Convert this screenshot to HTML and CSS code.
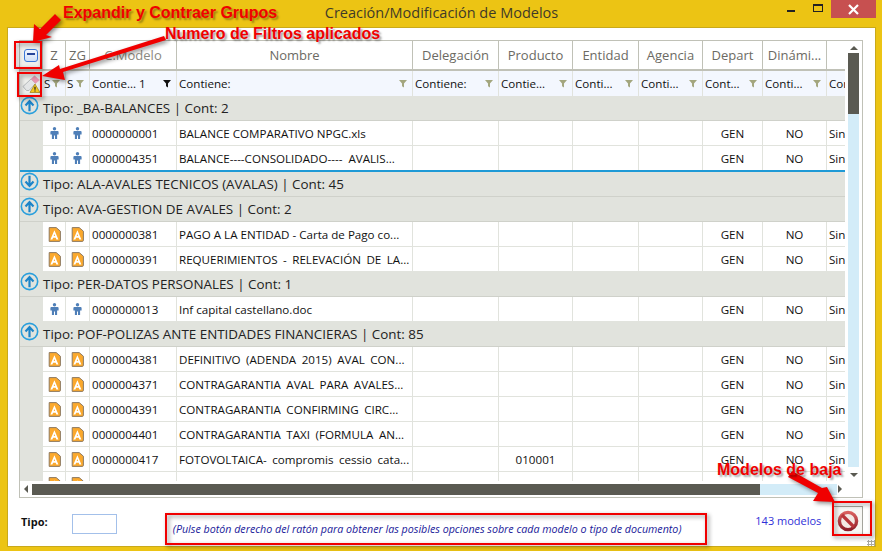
FILE: index.html
```html
<!DOCTYPE html>
<html lang="es">
<head>
<meta charset="utf-8">
<title>Creación/Modificación de Modelos</title>
<link rel="stylesheet" href="styles.css">
</head>
<body>
<svg class="defs" width="0" height="0" aria-hidden="true">
  <defs>
    <symbol id="person" viewBox="0 0 9 12">
      <circle cx="4.5" cy="1.7" r="1.7" fill="#4f7fb8"/>
      <path d="M1.4 4h6.2a1 1 0 0 1 1 1v2.6H7.1V12H5v-3.6H4V12H1.9V7.6H.4V5a1 1 0 0 1 1-1z" fill="#4f7fb8"/>
    </symbol>
    <symbol id="doc" viewBox="0 0 13 15">
      <path d="M1.2.6h7l4.2 3.6v9a1.2 1.2 0 0 1-1.2 1.2h-10z" fill="#fba92d" stroke="#8d7a63" stroke-width="1"/>
      <path d="M6.4 3.2 10.4 12.6H8.4l-.7-1.8H5.1l-.7 1.8H2.4zM5.7 9.1h1.4L6.4 7.1z" fill="#fff"/>
    </symbol>
    <symbol id="up" viewBox="0 0 20 20">
      <circle cx="10" cy="10" r="8.6" fill="none" stroke="#2a9fdc" stroke-width="1.7"/>
      <path d="M10 16V6M5.8 10 10 5.4 14.2 10" fill="none" stroke="#1c84c8" stroke-width="2.3"/>
    </symbol>
    <symbol id="down" viewBox="0 0 20 20">
      <circle cx="10" cy="10" r="8.6" fill="none" stroke="#2a9fdc" stroke-width="1.7"/>
      <path d="M10 4v10M5.8 10l4.2 4.6 4.2-4.6" fill="none" stroke="#1c84c8" stroke-width="2.3"/>
    </symbol>
    <symbol id="funnel" viewBox="0 0 9 9">
      <path d="M0 .5h9L5.6 4.4V9L3.4 7.6V4.4z"/>
    </symbol>
  </defs>
</svg>

<main class="window">
  <header class="titlebar">
    <h1 class="title">Creación/Modificación de Modelos</h1>
    <div class="controls">
      <span class="min"></span>
      <span class="max"></span>
      <span class="close">
        <svg width="11" height="11" viewBox="0 0 11 11"><path d="M1 1l9 9M10 1l-9 9" stroke="#fff" stroke-width="2.2"/></svg>
      </span>
    </div>
  </header>

  <section class="client">
    <div class="grid">
      <div class="grid-body">
        <div class="viewport">
          <div class="row heads">
            <div class="corner"><span class="minus"></span></div>
            <div>Z</div><div>ZG</div><div class="dim">C.Modelo</div><div>Nombre</div><div>Delegación</div><div>Producto</div><div>Entidad</div><div>Agencia</div><div>Depart</div><div>Dinámi...</div><div></div>
          </div>

          <div class="row filters">
            <div class="corner">
              <svg width="20" height="20" viewBox="0 0 20 20">
                <path d="M1 12.5 9 5l4.5 4.5-6.5 7H4.500z" fill="#e3e5e6" stroke="#b4b8ba"/>
                <path d="M9 5l3.500-3.200 5 4.200-4 3.500z" fill="#e996b0" stroke="#d9a0b2" stroke-width=".5"/>
                <path d="M13 10l5 8.500H8z" fill="#f4c91e" stroke="#9a7d14" stroke-width=".7"/>
                <path d="M13 12.800v3M13 16.400v1.100" stroke="#222" stroke-width="1.200"/>
              </svg>
            </div>
            <div>S<svg class="fn"><use href="#funnel"/></svg></div>
            <div>S<svg class="fn"><use href="#funnel"/></svg></div>
            <div>Contie... 1<svg class="fn on"><use href="#funnel"/></svg></div>
            <div>Contiene:<svg class="fn"><use href="#funnel"/></svg></div>
            <div>Contiene:<svg class="fn"><use href="#funnel"/></svg></div>
            <div>Contie...<svg class="fn"><use href="#funnel"/></svg></div>
            <div>Conti...<svg class="fn"><use href="#funnel"/></svg></div>
            <div>Conti...<svg class="fn"><use href="#funnel"/></svg></div>
            <div>Cont...<svg class="fn"><use href="#funnel"/></svg></div>
            <div>Conti...<svg class="fn"><use href="#funnel"/></svg></div>
            <div>Cor</div>
          </div>

          <div class="group"><svg class="toggle"><use href="#up"/></svg>Tipo: _BA-BALANCES | Cont: 2</div>
          <div class="row data"><div class="gutter"></div><div class="ic"><svg class="p"><use href="#person"/></svg></div><div class="ic"><svg class="p"><use href="#person"/></svg></div><div>0000000001</div><div>BALANCE COMPARATIVO NPGC.xls</div><div></div><div></div><div></div><div></div><div class="c">GEN</div><div class="c">NO</div><div>Sin</div></div>
          <div class="row data last"><div class="gutter"></div><div class="ic"><svg class="p"><use href="#person"/></svg></div><div class="ic"><svg class="p"><use href="#person"/></svg></div><div>0000004351</div><div>BALANCE----CONSOLIDADO----&nbsp; AVALIS...</div><div></div><div></div><div></div><div></div><div class="c">GEN</div><div class="c">NO</div><div>Sin</div></div>

          <div class="group"><svg class="toggle"><use href="#down"/></svg>Tipo: ALA-AVALES TECNICOS (AVALAS) | Cont: 45</div>
          <div class="group"><svg class="toggle"><use href="#up"/></svg>Tipo: AVA-GESTION DE AVALES | Cont: 2</div>
          <div class="row data"><div class="gutter"></div><div class="ic"><svg class="d"><use href="#doc"/></svg></div><div class="ic"><svg class="d"><use href="#doc"/></svg></div><div>0000000381</div><div>PAGO A LA ENTIDAD - Carta de Pago co...</div><div></div><div></div><div></div><div></div><div class="c">GEN</div><div class="c">NO</div><div>Sin</div></div>
          <div class="row data"><div class="gutter"></div><div class="ic"><svg class="d"><use href="#doc"/></svg></div><div class="ic"><svg class="d"><use href="#doc"/></svg></div><div>0000000391</div><div class="wide">REQUERIMIENTOS - RELEVACIÓN DE LA...</div><div></div><div></div><div></div><div></div><div class="c">GEN</div><div class="c">NO</div><div>Sin</div></div>

          <div class="group"><svg class="toggle"><use href="#up"/></svg>Tipo: PER-DATOS PERSONALES | Cont: 1</div>
          <div class="row data"><div class="gutter"></div><div class="ic"><svg class="p"><use href="#person"/></svg></div><div class="ic"><svg class="p"><use href="#person"/></svg></div><div>0000000013</div><div>Inf capital castellano.doc</div><div></div><div></div><div></div><div></div><div class="c">GEN</div><div class="c">NO</div><div>Sin</div></div>

          <div class="group"><svg class="toggle"><use href="#up"/></svg>Tipo: POF-POLIZAS ANTE ENTIDADES FINANCIERAS | Cont: 85</div>
          <div class="row data"><div class="gutter"></div><div class="ic"><svg class="d"><use href="#doc"/></svg></div><div class="ic"><svg class="d"><use href="#doc"/></svg></div><div>0000004381</div><div class="wide">DEFINITIVO (ADENDA 2015) AVAL CON...</div><div></div><div></div><div></div><div></div><div class="c">GEN</div><div class="c">NO</div><div>Sin</div></div>
          <div class="row data"><div class="gutter"></div><div class="ic"><svg class="d"><use href="#doc"/></svg></div><div class="ic"><svg class="d"><use href="#doc"/></svg></div><div>0000004371</div><div class="wide">CONTRAGARANTIA AVAL PARA AVALES...</div><div></div><div></div><div></div><div></div><div class="c">GEN</div><div class="c">NO</div><div>Sin</div></div>
          <div class="row data"><div class="gutter"></div><div class="ic"><svg class="d"><use href="#doc"/></svg></div><div class="ic"><svg class="d"><use href="#doc"/></svg></div><div>0000004391</div><div class="wide">CONTRAGARANTIA CONFIRMING CIRC...</div><div></div><div></div><div></div><div></div><div class="c">GEN</div><div class="c">NO</div><div>Sin</div></div>
          <div class="row data"><div class="gutter"></div><div class="ic"><svg class="d"><use href="#doc"/></svg></div><div class="ic"><svg class="d"><use href="#doc"/></svg></div><div>0000004401</div><div class="wide">CONTRAGARANTIA TAXI (FORMULA AN...</div><div></div><div></div><div></div><div></div><div class="c">GEN</div><div class="c">NO</div><div>Sin</div></div>
          <div class="row data"><div class="gutter"></div><div class="ic"><svg class="d"><use href="#doc"/></svg></div><div class="ic"><svg class="d"><use href="#doc"/></svg></div><div>0000000417</div><div class="wide">FOTOVOLTAICA- compromis cessio cata...</div><div></div><div class="c">010001</div><div></div><div></div><div class="c">GEN</div><div class="c">NO</div><div>Sin</div></div>
          <div class="row data"><div class="gutter"></div><div class="ic"><svg class="d"><use href="#doc"/></svg></div><div class="ic"><svg class="d"><use href="#doc"/></svg></div><div>0000000418</div><div class="wide">FOTOVOLTAICA- Compromis cessio cata...</div><div></div><div class="c">010001</div><div></div><div></div><div class="c">GEN</div><div class="c">NO</div><div>Sin</div></div>
        </div>

        <div class="vscroll">
          <span class="arrow-up"></span>
          <span class="vtrack"><span class="vthumb"></span></span>
          <span class="arrow-down"></span>
        </div>
      </div>
      <div class="hscroll">
        <span class="arrow-left"></span>
        <span class="htrack"><span class="hthumb"></span></span>
        <span class="arrow-right"></span>
      </div>
    </div>

    <footer class="footer">
      <label class="type-label" for="tipo">Tipo:</label>
      <input class="type-input" id="tipo" type="text">
      <p class="hint">(Pulse botón derecho del ratón para obtener las posibles opciones sobre cada modelo o tipo de documento)</p>
      <span class="count">143 modelos</span>
      <button class="ban" type="button" aria-label="Modelos de baja">
        <svg width="22" height="22" viewBox="0 0 22 22">
          <defs><linearGradient id="banfill" x1="0" y1="0" x2="0" y2="1"><stop offset="0" stop-color="#d9605e"/><stop offset="1" stop-color="#8e1f2a"/></linearGradient></defs>
          <circle cx="11" cy="11" r="8.600" fill="#f3e9e4" stroke="url(#banfill)" stroke-width="3.400"/>
          <path d="M5 5l12 12" stroke="#b8363a" stroke-width="3.200"/>
        </svg>
      </button>
      <span class="grip"></span>
    </footer>
  </section>
</main>

<div class="notes">
  <svg class="arrows" width="882" height="551" viewBox="0 0 882 551">
    <g fill="#f00000">
      <path d="M33 42 34 24l6 5 15-15 6 6-15 15 6 2z"/>
      <path d="M42 76 59 65l1 4L164 36l2 4L63 72l2 8z"/>
      <path d="M835 502 813 501l5-8-30-16 4-6 30 17 5-1z"/>
    </g>
    <g fill="none" stroke="#f00000" stroke-width="2">
      <rect x="15" y="42" width="26" height="26"/>
      <rect x="18" y="73" width="23" height="23"/>
      <rect x="166" y="514" width="540" height="30"/>
      <rect x="833" y="502" width="38" height="33"/>
    </g>
  </svg>
  <span class="note note-a">Expandir y Contraer Grupos</span>
  <span class="note note-b">Numero de Filtros aplicados</span>
  <span class="note note-c">Modelos de baja</span>
</div>
</body>
</html>
```

FILE: styles.css
```css
* { box-sizing: border-box; }
html, body { margin: 0; padding: 0; }
body {
  width: 882px;
  height: 551px;
  overflow: hidden;
  position: relative;
  font-family: "Open Sans", "Noto Sans", sans-serif;
  background: #ecc414;
}
.defs { position: absolute; }

.window {
  width: 882px;
  height: 551px;
  padding: 0 6px 4px 7px;
  display: flex;
  flex-direction: column;
  background: #ecc414;
}
.titlebar {
  height: 27px;
  flex: none;
  position: relative;
  display: flex;
  justify-content: center;
  align-items: center;
}
.title {
  margin: 0;
  font-family: "Open Sans", sans-serif;
  font-size: 14.5px;
  font-weight: 400;
  color: #3f3a28;
  transform: translateY(-1px);
}
.controls {
  position: absolute;
  right: 0;
  top: 0;
  display: flex;
  align-items: flex-start;
}
.min { width: 8px; height: 2px; margin: 10px 18px 0 0; background: #222; }
.max { width: 10px; height: 8px; margin: 4px 8px 0 0; border: 1px solid #222; border-top-width: 2px; }
.close {
  width: 45px;
  height: 18px;
  background: #c75050;
  display: flex;
  align-items: center;
  justify-content: center;
}

.client {
  flex: 1;
  background: #fff;
  border: 1px solid #c9a91a;
  padding: 12px 12px 0 11px;
  display: flex;
  flex-direction: column;
}

.grid {
  width: 844px;
  height: 458px;
  flex: none;
  border: 1px solid #c0c1b7;
  display: flex;
  flex-direction: column;
}
.grid-body { flex: 1; display: flex; min-height: 0; }
.viewport { width: 825px; overflow: hidden; font-size: 11.6px; color: #111; }

.row {
  display: grid;
  grid-template-columns: 23px 23px 24px 87px 236px 86px 74px 66px 64px 60px 64px 19px;
}
.row > div {
  overflow: hidden;
  white-space: nowrap;
}
.heads { height: 30px; border-bottom: 2px solid #c0c1b7; }
.heads > div {
  display: flex;
  align-items: center;
  justify-content: center;
  font-size: 13px;
  color: #6c6a63;
  background: #fff;
  border-right: 1px solid #c0c1b7;
}
.heads > div.dim { color: #8b8980; }
.heads > div:last-child { border-right: 0; }
.heads > .corner { background: #eeefec; }
.minus {
  width: 14px;
  height: 13px;
  border: 1.5px solid #3b78d8;
  border-radius: 3px;
  background: linear-gradient(#f2f6fd, #cfe0f7);
  position: relative;
}
.minus::after {
  content: "";
  position: absolute;
  left: 2px;
  right: 2px;
  top: 3.5px;
  height: 2px;
  background: #26469a;
}

.filters { height: 25px; background: #f3f7fe; }
.filters > div {
  display: flex;
  align-items: center;
  justify-content: space-between;
  padding: 0 5px 0 1px;
  border-right: 1px solid #e1e3dd;
  color: #111;
}
.filters > .corner { background: #eeefec; padding: 0; justify-content: center; border-right: 0; }
.filters > div:nth-child(n+4) { padding-left: 2px; }
.fn { width: 8px; height: 9px; flex: none; fill: #a3a67e; }
.fn.on { fill: #111; }

.group {
  height: 25px;
  position: relative;
  padding-left: 23px;
  display: flex;
  align-items: center;
  background: #e1e3dd;
  border-bottom: 1px solid #cfd1ca;
  font-size: 13.4px;
  color: #222;
  white-space: nowrap;
  overflow: hidden;
}
.toggle {
  position: absolute;
  left: 0;
  top: 0;
  width: 19px;
  height: 19px;
}

.data { height: 25px; background: #fff; }
.data > div {
  display: flex;
  align-items: center;
  padding-left: 2px;
  border-right: 1px solid #e1e3dd;
  border-bottom: 1px solid #e1e3dd;
}
.data > .gutter { background: #e1e3dd; border: 0; padding: 0; }
.data > .ic { justify-content: center; padding: 0; }
.data > .c { justify-content: center; padding: 0; }
.data > .wide { word-spacing: 2.5px; }
.data > div:last-child { border-right: 0; }
.data.last { height: 26px; border-bottom: 2px solid #1f9ad6; }
.data.last > div { border-bottom: 0; }
.p { width: 9px; height: 12px; }
.d { width: 13px; height: 15px; }

.vscroll {
  width: 17px;
  flex: none;
  display: flex;
  flex-direction: column;
  align-items: center;
  background: #fff;
  padding-bottom: 4px;
}
.arrow-up {
  flex: none;
  margin: 5px 0 3px;
  border-left: 4px solid transparent;
  border-right: 4px solid transparent;
  border-bottom: 4px solid #5a5a52;
}
.arrow-down {
  flex: none;
  margin: 6px 0 0;
  border-left: 4px solid transparent;
  border-right: 4px solid transparent;
  border-top: 4px solid #5a5a52;
}
.vtrack { width: 11px; flex: 1; background: #d3ecf8; }
.vthumb { display: block; height: 61px; background: #5a5a52; }

.hscroll {
  height: 16px;
  flex: none;
  display: flex;
  align-items: center;
  background: #fff;
}
.arrow-left {
  margin: 0 4px 0 4px;
  flex: none;
  border-top: 4px solid transparent;
  border-bottom: 4px solid transparent;
  border-right: 4px solid #5a5a52;
}
.arrow-right {
  margin-left: 1px;
  flex: none;
  border-top: 4px solid transparent;
  border-bottom: 4px solid transparent;
  border-left: 4px solid #5a5a52;
}
.htrack { width: 805px; height: 11px; flex: none; background: #d3ecf8; }
.hthumb { display: block; width: 728px; height: 11px; background: #5a5a52; }

.footer {
  flex: 1;
  display: flex;
  align-items: flex-start;
  position: relative;
  padding-left: 2px;
}
.type-label {
  margin-top: 16px;
  width: 51px;
  font: 700 11px "Open Sans", sans-serif;
  line-height: 16px;
  color: #111;
}
.type-input {
  width: 45px;
  height: 20px;
  border: 1px solid #a3c0ea;
  background: #fff;
  margin: 16px 56px 0 0;
  padding: 0;
}
.hint {
  margin: 24px 0 0;
  width: 532px;
  font: italic 10.7px "Open Sans", sans-serif;
  line-height: 14px;
  color: #20209a;
  white-space: nowrap;
}
.count {
  margin: 16px 0 0 52px;
  width: 76px;
  font-size: 11px;
  line-height: 14px;
  color: #3030d8;
  white-space: nowrap;
}
.ban {
  width: 30px;
  height: 29px;
  margin: 8px 0 0 2px;
  padding: 0;
  border: 1px solid #a4a49c;
  background: #f7f7f4;
  display: flex;
  align-items: center;
  justify-content: center;
}
.grip {
  position: absolute;
  right: -12px;
  bottom: 0;
  width: 8px;
  height: 6px;
  background: radial-gradient(circle, #a9a9a2 1px, transparent 1.2px) 0 0 / 3px 3px;
}

.notes { position: absolute; inset: 0; pointer-events: none; }
.arrows {
  position: absolute;
  left: 0;
  top: 0;
  filter: drop-shadow(2px 2px 2px rgba(0,0,0,.45));
}
.note {
  position: absolute;
  font: 700 16px "Liberation Sans", Arial, sans-serif;
  color: #f00000;
  text-shadow: 2px 2px 2px rgba(0,0,0,.35);
  white-space: nowrap;
}
.note-a { left: 63px; top: 4px; }
.note-b { left: 165px; top: 25px; }
.note-c { left: 717px; top: 461px; }
```
